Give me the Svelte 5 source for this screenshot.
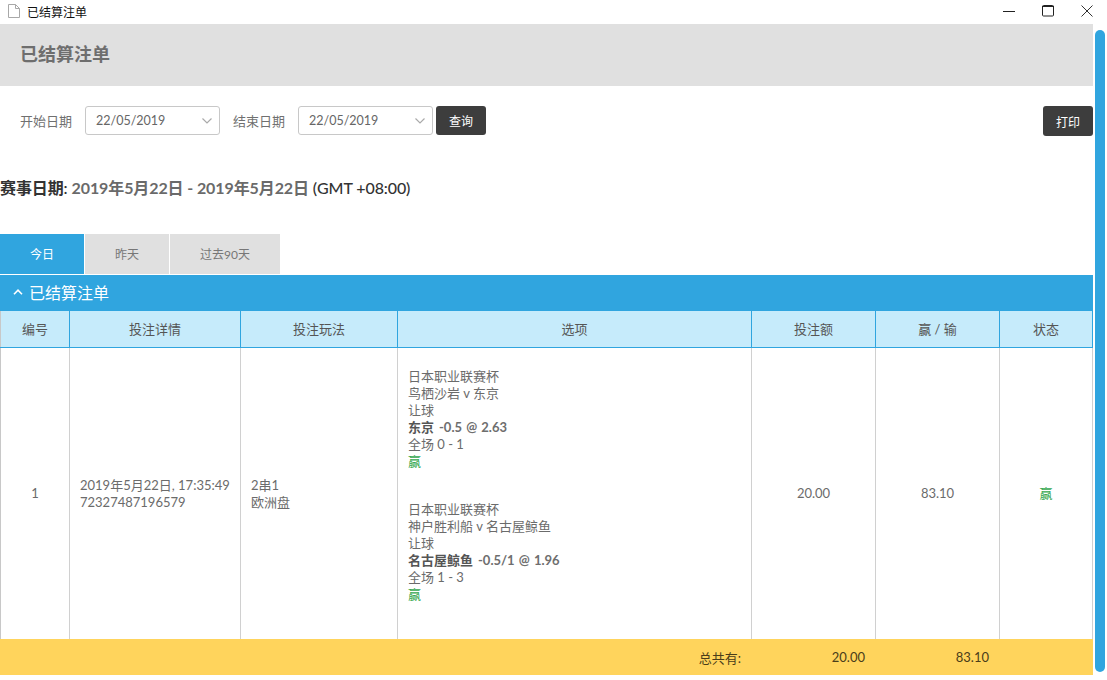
<script>
  const tabs = ['今日', '昨天', '过去90天'];
  const columns = ['编号', '投注详情', '投注玩法', '选项', '投注额', '赢 / 输', '状态'];
  const legs = [
    { league: '日本职业联赛杯', match: '鸟栖沙岩 v 东京', market: '让球', pick: '东京', odds: '-0.5 @ 2.63', score: '全场 0 - 1' },
    { league: '日本职业联赛杯', match: '神户胜利船 v 名古屋鲸鱼', market: '让球', pick: '名古屋鲸鱼', odds: '-0.5/1 @ 1.96', score: '全场 1 - 3' }
  ];
</script>

<div class="window">
  <div class="titlebar">
    <svg class="doc" viewBox="0 0 12 14" width="12" height="14" fill="none" stroke="#a8a8a8"><path d="M.5.5h7l4 4v9H.5z" /><path d="M7.5.5v4h4" /></svg>
    <span class="title">已结算注单</span>
    <div class="controls">
      <svg viewBox="0 0 12 12" width="12" height="12" fill="none" stroke="#222"><path d="M0 6.5h12" /></svg>
      <svg viewBox="0 0 12 12" width="12" height="12" fill="none" stroke="#222"><rect x=".5" y=".5" width="11" height="10.5" rx="1" /><path d="M0 1.5h12" /></svg>
      <svg viewBox="0 0 12 12" width="12" height="12" fill="none" stroke="#333"><path d="M.5.5l11 11M11.5.5l-11 11" /></svg>
    </div>
  </div>

  <main>
    <header class="pagehead"><h1>已结算注单</h1></header>

    <div class="filters">
      <label for="start">开始日期</label>
      <div class="select" id="start">22/05/2019
        <svg viewBox="0 0 10 6" width="10" height="6" fill="none" stroke="#aaa" stroke-width="1.2"><path d="M.5.5L5 5l4.5-4.5" /></svg>
      </div>
      <label for="end" class="second">结束日期</label>
      <div class="select" id="end">22/05/2019
        <svg viewBox="0 0 10 6" width="10" height="6" fill="none" stroke="#aaa" stroke-width="1.2"><path d="M.5.5L5 5l4.5-4.5" /></svg>
      </div>
      <button type="button" class="query">查询</button>
      <button type="button" class="print">打印</button>
    </div>

    <p class="range"><b>赛事日期:</b> <span>2019年5月22日 - 2019年5月22日</span> (GMT +08:00)</p>

    <div class="tabs">
      {#each tabs as t, i}
        <button type="button" class="tab" class:active={i === 0}>{t}</button>
      {/each}
    </div>

    <div class="section">
      <svg viewBox="0 0 10 6" width="10" height="6" fill="none" stroke="#fff" stroke-width="1.6"><path d="M1 5.2L5 1.2l4 4" /></svg>
      已结算注单
    </div>

    <table>
      <colgroup>
        <col style="width:69px" /><col style="width:171px" /><col style="width:157px" /><col style="width:354px" /><col style="width:124px" /><col style="width:124px" /><col style="width:93px" />
      </colgroup>
      <thead>
        <tr>
          {#each columns as c}<th>{c}</th>{/each}
        </tr>
      </thead>
      <tbody>
        <tr>
          <td class="center">1</td>
          <td>2019年5月22日, 17:35:49<br />72327487196579</td>
          <td>2串1<br />欧洲盘</td>
          <td class="legs">
            {#each legs as l}
              <div class="leg">
                <div>{l.league}</div>
                <div>{l.match}</div>
                <div>{l.market}</div>
                <div class="pick"><b>{l.pick}</b>{l.odds}</div>
                <div>{l.score}</div>
                <div class="win">赢</div>
              </div>
            {/each}
          </td>
          <td class="center">20.00</td>
          <td class="center">83.10</td>
          <td class="center win">赢</td>
        </tr>
      </tbody>
    </table>

    <div class="totals">
      <span class="label">总共有:</span>
      <span class="stake">20.00</span>
      <span class="payout">83.10</span>
    </div>
  </main>

  <div class="scrollbar"></div>
</div>

<style>
  :global(body) {
    background: #fff;
    overflow: hidden;
  }
  .window {
    position: relative;
    width: 1107px;
    height: 680px;
    overflow: hidden;
    font-family: Lato, "Noto Sans CJK SC", sans-serif;
    font-size: 13px;
    color: #666;
  }
  .titlebar {
    height: 24px;
    box-sizing: border-box;
    display: flex;
    align-items: center;
    padding-left: 8px;
    padding-bottom: 2px;
    font-size: 12px;
    color: #111;
  }
  .title {
    margin-left: 7px;
  }
  .controls {
    margin-left: auto;
    display: flex;
    gap: 27px;
    margin-right: 14px;
  }
  main {
    width: 1093px;
  }
  .pagehead {
    height: 62px;
    box-sizing: border-box;
    background: #e0e0e0;
    display: flex;
    align-items: center;
    padding-left: 20px;
    padding-bottom: 4px;
  }
  h1 {
    margin: 0;
    font-size: 18px;
    font-weight: 700;
    color: #6e6e6e;
  }
  .filters {
    display: flex;
    align-items: flex-start;
    height: 29px;
    margin-top: 20px;
    padding-left: 20px;
  }
  .filters label {
    width: 65px;
    color: #707070;
    line-height: 31px;
  }
  .filters label.second {
    margin-left: 13px;
  }
  .select {
    width: 135px;
    height: 29px;
    box-sizing: border-box;
    border: 1px solid #c8c8c8;
    border-radius: 3px;
    padding-left: 10px;
    display: flex;
    align-items: center;
    justify-content: space-between;
    padding-right: 7px;
    font-size: 12.5px;
    color: #666;
  }
  .select svg {
    margin-top: 1px;
  }
  button {
    font: inherit;
    border: none;
  }
  .query,
  .print {
    width: 50px;
    height: 29px;
    background: #3d3d3d;
    color: #fff;
    border-radius: 3px;
    padding: 0;
    font-size: 12px;
  }
  .query {
    margin-left: 3px;
  }
  .print {
    margin-left: auto;
    height: 30px;
  }
  .range {
    margin: 41px 0 0;
    height: 24px;
    line-height: 24px;
    font-size: 16px;
    font-weight: 500;
    letter-spacing: -0.1px;
    color: #333;
  }
  .range b {
    color: #333;
    font-weight: 600;
  }
  .range span {
    color: #6a6a6a;
    font-weight: 700;
  }
  .tabs {
    display: flex;
    gap: 1px;
    margin-top: 34px;
  }
  .tab {
    width: 84px;
    height: 40px;
    padding: 0 0 2px;
    background: #e0e0e0;
    color: #777;
    font-size: 12px;
  }
  .tab:nth-child(3) {
    width: 110px;
  }
  .tab.active {
    background: #30a5df;
    color: #fff;
  }
  .section {
    margin-top: 1px;
    height: 36px;
    box-sizing: border-box;
    background: #30a5df;
    color: #fff;
    font-size: 16px;
    display: flex;
    align-items: center;
    gap: 6px;
    padding: 0 0 2px 13px;
  }
  table {
    width: 1092px;
    table-layout: fixed;
    border-collapse: collapse;
  }
  th {
    height: 34px;
    padding: 0 0 2px;
    background: #c6ebfb;
    border: 1px solid #30a5df;
    border-top: none;
    font-weight: 400;
    color: #555;
    font-size: 13px;
  }
  td {
    height: 290px;
    padding: 0 10px;
    border: 1px solid #d0d0d0;
    border-top: none;
    border-bottom: none;
    line-height: 17px;
    color: #6b6b6b;
  }
  th:first-child,
  td:first-child {
    border-left: 1px solid #c8c8c8;
  }
  .center {
    text-align: center;
  }
  td.legs {
    height: 275px;
    padding-bottom: 16px;
  }
  .leg + .leg {
    margin-top: 31px;
  }
  .pick {
    font-weight: 700;
    color: #6e6e6e;
    word-spacing: 1px;
  }
  .pick b {
    font-weight: 700;
    color: #555;
    margin-right: 5px;
  }
  td.win,
  .win {
    color: #35a84f;
  }
  .totals {
    position: relative;
    height: 36px;
    background: #ffd45c;
    display: grid;
    grid-template-columns: 741px 124px 124px;
    align-items: center;
    color: #4a3d1a;
    text-align: right;
  }
  .scrollbar {
    position: absolute;
    top: 30px;
    left: 1095px;
    width: 10px;
    height: 642px;
    border-radius: 5px;
    background: #30a5df;
  }
</style>
